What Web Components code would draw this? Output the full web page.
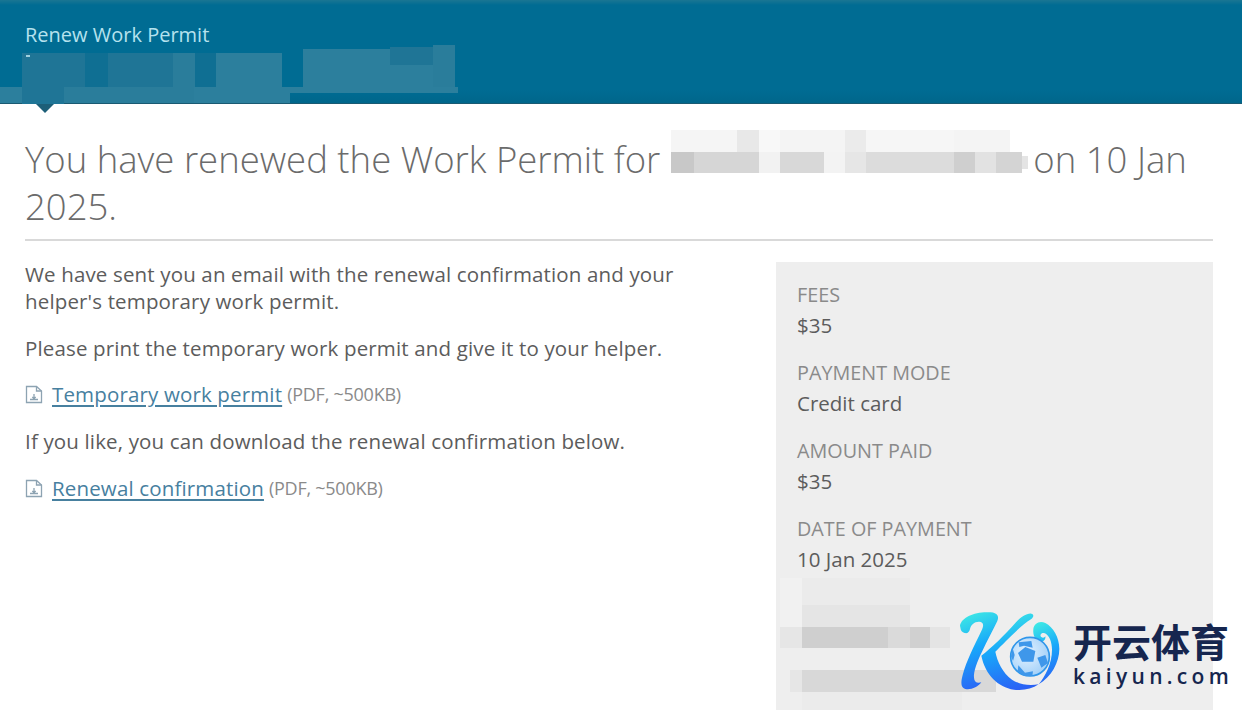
<!DOCTYPE html>
<html lang="en">
<head>
<meta charset="utf-8">
<title>Renew Work Permit</title>
<style>
html, body { margin: 0; height: 710px; overflow: hidden; background: #fff; }
body { font-family: "Open Sans", "Liberation Sans", sans-serif; color: #555; }
h1 .gap { display: inline-block; width: 373px; }
</style>
</head>
<body>
<permit-page>
  <permit-banner title-text="Renew Work Permit"></permit-banner>
  <permit-main>
    <h1 slot="heading"><span>You have renewed the Work Permit for</span><span class="gap"></span><span>on 10 Jan</span><br><span>2025.</span></h1>
    <permit-message slot="message"></permit-message>
    <permit-summary slot="summary"></permit-summary>
  </permit-main>
</permit-page>
<script>
// mosaic: list of [x, y, w, h, colour] relative to the element
class MosaicPatch extends HTMLElement {
  constructor() {
    super();
    this.attachShadow({ mode: "open" });
    const cells = JSON.parse(this.getAttribute("cells") || "[]");
    this.shadowRoot.innerHTML = `<style>
      :host { display: block; position: absolute; left: 0; top: 0; width: 0; height: 0; }
      i { position: absolute; display: block; filter: blur(.7px); }
    </style>` + cells.map(c =>
      `<i style="left:${c[0]}px;top:${c[1]}px;width:${c[2]}px;height:${c[3]}px;background:${c[4]}"></i>`
    ).join("");
  }
}
customElements.define("mosaic-patch", MosaicPatch);

class PermitPage extends HTMLElement {
  constructor() {
    super();
    this.attachShadow({ mode: "open" });
    this.shadowRoot.innerHTML = `<style>
      :host { display: block; position: relative; width: 1242px; height: 710px; overflow: hidden; }
    </style><slot></slot>`;
  }
}
customElements.define("permit-page", PermitPage);

class PermitBanner extends HTMLElement {
  constructor() {
    super();
    this.attachShadow({ mode: "open" });
    const a = "#2c7f9d", b = "#1f7596", c = "#0f6f93", d = "#2a7d9b";
    this.shadowRoot.innerHTML = `<style>
      :host { display: block; position: relative; height: 104px; box-sizing: border-box; padding: 21px 25px 0;
        background: linear-gradient(#1a7693 0, #006c93 5px, #006c93 90px, #00668b 100%); border-bottom: 1px solid #1a5a72; }
      .title { font: 400 20px/27px "Open Sans", "Liberation Sans", sans-serif; color: #b5e2ee; }
      .notch { position: absolute; left: 36px; top: 104px; width: 0; height: 0;
        border-left: 9px solid transparent; border-right: 9px solid transparent; border-top: 9px solid #1d5f78; }
    </style>
    <div class="title">${this.getAttribute("title-text")}</div>
    <mosaic-patch cells='${JSON.stringify([
      [22,53,63,34,b],[85,53,23,34,c],[108,53,65,34,b],[173,53,22,34,d],[195,53,21,34,c],[216,53,66,34,a],
      [303,49,87,43,a],[390,47,43,18,b],[390,65,43,27,a],[433,45,22,47,d],
      [0,87,290,16,a],[290,87,168,6,a],[22,87,42,17,b],[64,87,130,16,d],
      [26,55,4,2,"#9fd0de"]
    ])}'></mosaic-patch>
    <div class="notch"></div>`;
  }
}
customElements.define("permit-banner", PermitBanner);

class PermitMain extends HTMLElement {
  constructor() {
    super();
    this.attachShadow({ mode: "open" });
    this.shadowRoot.innerHTML = `<style>
      :host { display: block; position: relative; padding: 32px 29px 0 25px; }
      ::slotted(h1) { margin: 0; padding-bottom: 9px; border-bottom: 2px solid #d9d9d9;
        font: 300 36.5px/47px "Open Sans", "Liberation Sans", sans-serif; color: #6b6b6b; white-space: nowrap; }
      .cols { display: grid; grid-template-columns: 751px 437px; margin-top: 21px; }
    </style>
    <slot name="heading"></slot>
    <mosaic-patch cells='${JSON.stringify([
      [671,26,66,22,"#f5f5f5"],[737,26,22,22,"#e8e8e8"],[759,26,21,22,"#f8f8f8"],[780,26,65,22,"#f4f4f4"],
      [845,26,21,22,"#ebebeb"],[866,26,88,22,"#f6f6f6"],[954,26,56,22,"#f4f4f4"],
      [671,48,23,21,"#c8c8c8"],[694,48,65,21,"#d6d6d6"],[759,48,21,21,"#f2f2f2"],[780,48,44,21,"#d8d8d8"],
      [824,48,21,21,"#f3f3f3"],[845,48,21,21,"#e6e6e6"],[866,48,88,21,"#dcdcdc"],[954,48,21,21,"#cfcfcf"],
      [975,48,21,21,"#e2e2e2"],[996,48,26,21,"#d4d4d4"],[1022,52,6,13,"#e4e4e4"]
    ])}'></mosaic-patch>
    <div class="cols"><slot name="message"></slot><slot name="summary"></slot></div>`;
  }
}
customElements.define("permit-main", PermitMain);

class FileLink extends HTMLElement {
  constructor() {
    super();
    this.attachShadow({ mode: "open" });
    this.shadowRoot.innerHTML = `<style>
      :host { display: flex; align-items: center; }
      svg { width: 18px; height: 19px; margin-right: 9px; flex: none; }
      a { color: #47809f; text-decoration: underline; text-underline-offset: 3px; }
      small { font-size: 18px; color: #8a8a8a; margin-left: 5px; letter-spacing: -.25px; }
    </style>
    <svg viewBox="0 0 18 19" fill="none" stroke="#8da3b2" stroke-width="1.3">
      <path d="M1.500 1.500h10l5 4.500v11.500h-15z"/><path d="M11.500 1.500v4.500h5"/><path d="M5 14.500h8M9 9v4.500M7.300 12l1.700 1.700 1.700-1.700"/>
    </svg>
    <a href="#"><slot></slot></a><small>(PDF, ~500KB)</small>`;
  }
}
customElements.define("file-link", FileLink);

class PermitMessage extends HTMLElement {
  constructor() {
    super();
    this.attachShadow({ mode: "open" });
    this.shadowRoot.innerHTML = `<style>
      :host { display: block; margin-top: -1px; font: 400 20.5px/27px "Open Sans", "Liberation Sans", sans-serif; letter-spacing: .15px; color: #5c5c5c; }
      p { margin: 0 0 19.5px; }
      p.last { margin-bottom: 20.5px; }
      file-link { margin-bottom: 19.5px; }
    </style>
    <p>We have sent you an email with the renewal confirmation and your<br>helper's temporary work permit.</p>
    <p>Please print the temporary work permit and give it to your helper.</p>
    <file-link>Temporary work permit</file-link>
    <p class="last">If you like, you can download the renewal confirmation below.</p>
    <file-link>Renewal confirmation</file-link>`;
  }
}
customElements.define("permit-message", PermitMessage);

class SummaryItem extends HTMLElement {
  constructor() {
    super();
    this.attachShadow({ mode: "open" });
    this.shadowRoot.innerHTML = `<style>
      :host { display: block; margin-bottom: 21px; }
      .k { font-size: 19.8px; line-height: 26px; color: #8a8a8a; margin-bottom: 4px; }
      .v { font-size: 20.5px; line-height: 27px; color: #5c5c5c; }
    </style>
    <div class="k">${this.getAttribute("label")}</div>
    <div class="v"><slot></slot></div>`;
  }
}
customElements.define("summary-item", SummaryItem);

class PermitSummary extends HTMLElement {
  constructor() {
    super();
    this.attachShadow({ mode: "open" });
    this.shadowRoot.innerHTML = `<style>
      :host { display: block; position: relative; background: #eeeeee; height: 470px; box-sizing: border-box;
        padding: 20px 21px 0; font-family: "Open Sans", "Liberation Sans", sans-serif; }
    </style>
    <summary-item label="FEES">$35</summary-item>
    <summary-item label="PAYMENT MODE">Credit card</summary-item>
    <summary-item label="AMOUNT PAID">$35</summary-item>
    <summary-item label="DATE OF PAYMENT">10 Jan 2025</summary-item>
    <mosaic-patch cells='${JSON.stringify([
      [4,316,130,50,"#f1f1f1"],[26,316,108,27,"#ebebeb"],[26,343,108,22,"#e5e5e5"],
      [4,365,22,21,"#e6e6e6"],[26,365,86,21,"#cfcfcf"],[112,365,22,21,"#dadada"],[134,365,20,21,"#d0d0d0"],[154,365,20,21,"#e4e4e4"],
      [14,408,12,22,"#e6e6e6"],[26,408,194,22,"#d8d8d8"],[26,430,160,20,"#ebebeb"]
    ])}'></mosaic-patch>
    <kaiyun-logo></kaiyun-logo>`;
  }
}
customElements.define("permit-summary", PermitSummary);

class KaiyunLogo extends HTMLElement {
  constructor() {
    super();
    this.attachShadow({ mode: "open" });
    this.shadowRoot.innerHTML = `<style>
      :host { position: absolute; left: 174px; top: 343px; width: 285px; height: 90px; display: flex; }
      svg { width: 115px; height: 90px; flex: none; }
      .txt { margin-left: 8px; color: #16264f; }
      .cn { font: 700 39px/40px "Noto Sans CJK SC", sans-serif; margin-top: 15px; white-space: nowrap; }
      .en { font: 600 21px/24px "Open Sans", sans-serif; letter-spacing: 4.3px; margin-top: 4px; }
    </style>
    <svg viewBox="0 0 345 270">
      <defs>
        <linearGradient id="g" x1=".35" y1="0" x2=".55" y2="1"><stop offset="0" stop-color="#3ce6e6"/><stop offset=".45" stop-color="#18a8fa"/><stop offset="1" stop-color="#2a62f5"/></linearGradient>
        <radialGradient id="b" cx=".4" cy=".4" r=".7"><stop offset="0" stop-color="#e4f2ff"/><stop offset="1" stop-color="#9ccdf8"/></radialGradient>
      </defs>
      <path fill="url(#g)" d="M30 62C34 36 78 18 122 22c20 2 26 12 20 26-12 26-30 58-46 92-14 28-26 60-24 78 1 12 8 18 22 14-10 14-32 24-48 20-14-4-14-20-8-42 12-44 34-86 56-132 8-16 8-26-6-28-14-1-26 10-28 22-2 10-8 14-16 12-8-2-12-8-12-12z"/>
      <path fill="url(#g)" d="M94 152c32-24 68-60 104-100 14-16 34-28 46-26 8 2 8 10 0 16-26 16-52 42-76 66-12 12-22 22-32 32 6 30 22 64 50 84 22 14 50 20 80 14-20 14-48 20-74 16-48-8-86-44-98-102z"/>
      <path fill="url(#g)" d="M250 72c2-16 18-26 36-18 24 12 42 44 42 78 0 40-24 84-62 106 20-24 40-62 40-104 0-22-8-46-24-50-8-2-14 6-8 12 4 4 10 2 12-2 2 10-6 18-16 16-14-2-22-20-20-38z"/>
      <circle cx="240" cy="155" r="58" fill="url(#b)" stroke="#2f96ea" stroke-width="5"/>
      <path fill="#3f97ea" d="M226 126l30 12-6 32h-34l-12-26zM262 158l24-8 8 24-20 14zM206 112l38-4 4 20-26-6-14 4zM205 181l20 22 24-4-2 14-24 0-20-14zM188 130l6 20-5 18-6-14z"/>
    </svg>
    <div class="txt"><div class="cn">开云体育</div><div class="en">kaiyun.com</div></div>`;
  }
}
customElements.define("kaiyun-logo", KaiyunLogo);
</script>
</body>
</html>
